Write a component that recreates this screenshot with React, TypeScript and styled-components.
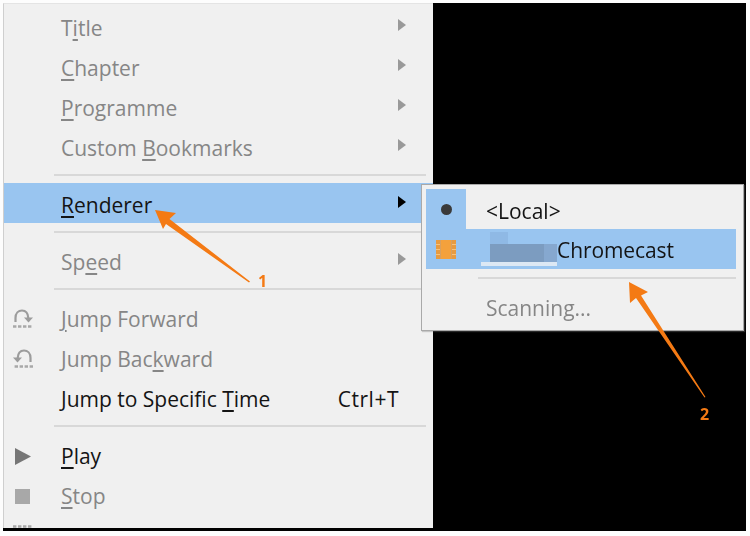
import React from "react";
import styled, { createGlobalStyle } from "styled-components";

const Global = createGlobalStyle`
  html, body { margin: 0; padding: 0; background: #fff; overflow: hidden; }
  * { box-sizing: border-box; }
`;

const Page = styled.div`
  position: relative;
  width: 750px;
  height: 536px;
  padding: 3px 4px 5px 3px;
  background: #fdfdfd;
  font-family: "Open Sans", "Noto Sans", sans-serif;
  font-size: 21px;
  overflow: hidden;
`;

const Screen = styled.div`
  position: relative;
  height: 528px;
  background: #000;
  filter: blur(0.5px);
`;

const Menu = styled.div`
  display: flex;
  flex-direction: column;
  width: 430px;
  height: 525px;
  padding-top: 4px;
  background: #f0f0f0;
  border-left: 1px solid #cfcfcf;
  border-top: 1px solid #e4e4e4;
  overflow: hidden;
`;

const Row = styled.div<{ $active?: boolean; $disabled?: boolean }>`
  display: flex;
  align-items: center;
  flex: none;
  height: 40px;
  padding: ${(p) => (p.$active ? "4px" : "0")} 27px 0 0;
  margin: ${(p) => (p.$active ? "-2px 0 2px" : "0")};
  background: ${(p) => (p.$active ? "#99c5f0" : "transparent")};
  color: ${(p) => (p.$disabled ? "#868686" : "#141414")};
`;

const IconCell = styled.span`
  display: flex;
  align-items: center;
  justify-content: center;
  flex: none;
  width: 57px;
  height: 40px;
  padding-right: 20px;
`;

const Label = styled.span`
  flex: 1;
  white-space: nowrap;
`;

const Key = styled.u`
  text-underline-offset: 3px;
  text-decoration-thickness: 1.5px;
`;

const Shortcut = styled.span`
  margin-right: 7px;
  letter-spacing: 0.5px;
  color: #141414;
`;

const Caret = styled.span<{ $dark?: boolean }>`
  flex: none;
  width: 0;
  height: 0;
  margin-top: -7px;
  border-style: solid;
  border-width: 6.5px 0 6.5px 8px;
  border-color: transparent transparent transparent ${(p) => (p.$dark ? "#000" : "#999")};
`;

const Separator = styled.div`
  flex: none;
  height: 2px;
  margin: 6px 7px 9px 50px;
  background: #d8d8d8;
`;

const Submenu = styled.div`
  position: absolute;
  left: 418px;
  top: 181px;
  width: 323px;
  height: 147px;
  padding: 4px 7px 0 4px;
  background: #f0f0f0;
  border: 1px solid #a9a9a9;
  box-shadow: 1px 1px 1px rgba(120, 120, 120, 0.35);
  z-index: 2;
`;

const SubRow = styled.div<{ $active?: boolean; $disabled?: boolean }>`
  display: flex;
  align-items: center;
  height: 40px;
  background: ${(p) => (p.$active ? "#99c5f0" : "transparent")};
  color: ${(p) => (p.$disabled ? "#868686" : "#141414")};
`;

const SubIcon = styled.span<{ $checked?: boolean }>`
  display: flex;
  align-items: center;
  justify-content: center;
  flex: none;
  width: 40px;
  height: 40px;
  background: ${(p) => (p.$checked ? "#99c5f0" : "transparent")};
`;

const Dot = styled.span`
  width: 11px;
  height: 11px;
  border-radius: 50%;
  background: #3a3a3a;
`;

const SubLabel = styled.span<{ $offset: number }>`
  margin-left: 20px;
  padding-top: ${(p) => p.$offset}px;
  white-space: nowrap;
`;

const ChromecastName = styled.span`
  padding-top: 1px;
  letter-spacing: -0.1px;
`;

const Redacted = styled.span`
  position: relative;
  display: block;
  flex: none;
  width: 67px;
  height: 40px;
  margin-left: 24px;
`;

const RedactedTop = styled.i`
  position: absolute;
  left: 0;
  top: 3px;
  width: 18px;
  height: 12px;
  background: #8fb9e5;
`;

const RedactedBlock = styled.i`
  position: absolute;
  left: 0;
  right: 0;
  top: 15px;
  height: 18px;
  background: linear-gradient(90deg, #7c9cc0 0 80%, #86a8cf 80% 100%);
`;

const RedactedLine = styled.i`
  position: absolute;
  left: -9px;
  right: 0;
  top: 33px;
  height: 4px;
  background: #dce8f4;
`;

const SubSeparator = styled.div`
  height: 2px;
  margin: 8px 0 8px 52px;
  background: #d8d8d8;
`;

const ArrowLayer = styled.svg`
  position: absolute;
  inset: 0;
  z-index: 5;
  pointer-events: none;
`;

const Num = styled.span<{ $x: number; $y: number }>`
  position: absolute;
  left: ${(p) => p.$x}px;
  top: ${(p) => p.$y}px;
  font-family: "Open Sans", sans-serif;
  font-weight: 700;
  font-size: 16px;
  line-height: 18px;
  color: #f47a14;
  z-index: 5;
`;

const JumpIcon = ({ back }: { back?: boolean }) => (
  <svg width="22" height="20" viewBox="0 0 22 20" fill="none">
    <g transform={back ? "translate(22 0) scale(-1 1)" : undefined}>
      <path d="M3.5 13 V9 C3.5 4.2 6.5 1.5 10 1.5 C13.5 1.5 16 4.2 16.3 9" stroke="#9c9c9c" strokeWidth="2.2" />
      <path d="M12 8.5 H21 L16.5 13.5 Z" fill="#9c9c9c" />
      <path d="M1 17.5 H21" stroke="#a8a8a8" strokeWidth="2.6" strokeDasharray="3.4 1.6" />
    </g>
  </svg>
);

const PlayIcon = () => (
  <svg width="16" height="17" viewBox="0 0 16 17"><path d="M0 0 L16 8.5 L0 17 Z" fill="#767676" /></svg>
);

const StopIcon = () => (
  <svg width="15" height="15" viewBox="0 0 15 15"><rect width="15" height="15" fill="#a8a8a8" /></svg>
);

const ResetIcon = () => (
  <svg width="22" height="22" viewBox="0 0 22 22"><path d="M1 1.5 H21" stroke="#a8a8a8" strokeWidth="2.4" strokeDasharray="3.4 1.6" /></svg>
);

const FilmIcon = () => (
  <svg width="20" height="19" viewBox="0 0 20 19">
    <rect width="20" height="19" fill="#f4a13c" />
    <rect x="0" width="4" height="19" fill="#e89b40" />
    <rect x="16" width="4" height="19" fill="#e89b40" />
    <path d="M4.5 0 V19 M15.5 0 V19" stroke="#d8a060" strokeWidth="1" />
    <path d="M0 4.5 H4 M0 9.5 H4 M0 14.5 H4 M16 4.5 H20 M16 9.5 H20 M16 14.5 H20" stroke="#f6c27e" strokeWidth="1" />
  </svg>
);

type Item = {
  text: React.ReactNode;
  disabled?: boolean;
  active?: boolean;
  caret?: boolean;
  icon?: React.ReactNode;
  shortcut?: string;
};

const groups: Item[][] = [
  [
    { text: <>T<Key>i</Key>tle</>, disabled: true, caret: true },
    { text: <><Key>C</Key>hapter</>, disabled: true, caret: true },
    { text: <><Key>P</Key>rogramme</>, disabled: true, caret: true },
    { text: <>Custom <Key>B</Key>ookmarks</>, disabled: true, caret: true },
  ],
  [{ text: <><Key>R</Key>enderer</>, active: true, caret: true }],
  [{ text: <>Sp<Key>e</Key>ed</>, disabled: true, caret: true }],
  [
    { text: <><Key>J</Key>ump Forward</>, disabled: true, icon: <JumpIcon /> },
    { text: <>Jump Bac<Key>k</Key>ward</>, disabled: true, icon: <JumpIcon back /> },
    { text: <>Jump to Specific <Key>T</Key>ime</>, shortcut: "Ctrl+T" },
  ],
  [
    { text: <><Key>P</Key>lay</>, icon: <PlayIcon /> },
    { text: <><Key>S</Key>top</>, disabled: true, icon: <StopIcon /> },
    { text: <>Reset</>, disabled: true, icon: <ResetIcon /> },
  ],
];

export default function App() {
  return (
    <Page>
      <Global />
      <Screen>
        <Menu>
          {groups.map((group, g) => (
            <React.Fragment key={g}>
              {g > 0 && <Separator />}
              {group.map((item, i) => (
                <Row key={i} $active={item.active} $disabled={item.disabled}>
                  <IconCell>{item.icon}</IconCell>
                  <Label>{item.text}</Label>
                  {item.shortcut && <Shortcut>{item.shortcut}</Shortcut>}
                  {item.caret && <Caret $dark={item.active} />}
                </Row>
              ))}
            </React.Fragment>
          ))}
        </Menu>
        <Submenu>
          <SubRow>
            <SubIcon $checked><Dot /></SubIcon>
            <SubLabel $offset={3}>&lt;Local&gt;</SubLabel>
          </SubRow>
          <SubRow $active>
            <SubIcon><FilmIcon /></SubIcon>
            <Redacted>
              <RedactedTop />
              <RedactedBlock />
              <RedactedLine />
            </Redacted>
            <ChromecastName>Chromecast</ChromecastName>
          </SubRow>
          <SubSeparator />
          <SubRow $disabled>
            <SubIcon />
            <SubLabel $offset={2}>Scanning...</SubLabel>
          </SubRow>
        </Submenu>
      </Screen>
      <ArrowLayer width="750" height="536" viewBox="0 0 750 536">
        <path d="M155 210 L176 213 L169.5 219 L250 281.5 L249 282.5 L166 224 L163 229 Z" fill="#f47a14" />
        <path d="M629 282 L648 292 L641 295.5 L705.5 397 L704.5 397.5 L636 298 L630 303 Z" fill="#f47a14" />
      </ArrowLayer>
      <Num $x={258} $y={272}>1</Num>
      <Num $x={700} $y={405}>2</Num>
    </Page>
  );
}
